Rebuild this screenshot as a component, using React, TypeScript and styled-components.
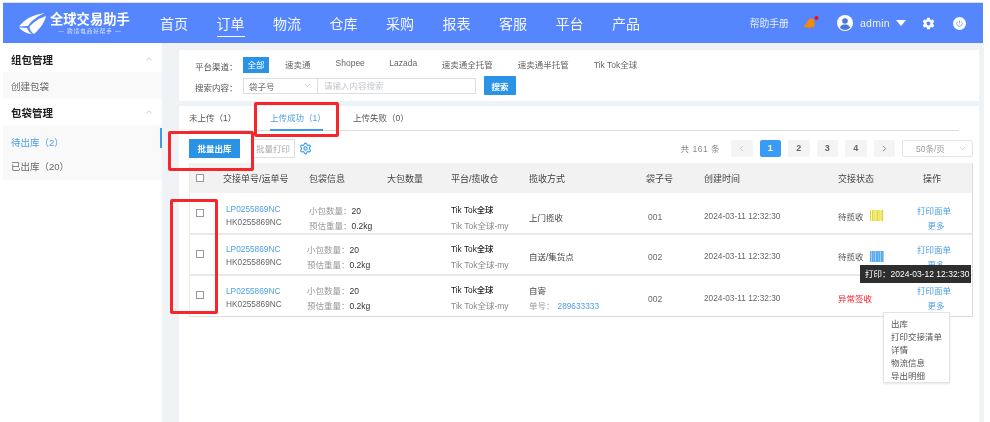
import React from "react"
import styled, { createGlobalStyle } from "styled-components"
import { ChevronDown, ChevronLeft, ChevronRight, ChevronUp, Settings } from "lucide-react"
import { IoSettingsSharp } from "react-icons/io5"

const GlobalStyle = createGlobalStyle`
  html, body { margin: 0; padding: 0; background: #fff; }
  * { box-sizing: border-box; }
  body { font-family: "Liberation Sans", "Noto Sans CJK SC", sans-serif; overflow: hidden; }
`

const navItems = ["首页", "订单", "物流", "仓库", "采购", "报表", "客服", "平台", "产品"]
const channels = ["全部", "速卖通", "Shopee", "Lazada", "速卖通全托管", "速卖通半托管", "Tik Tok全球"]
const columns = ["交接单号/运单号", "包袋信息", "大包数量", "平台/揽收仓", "揽收方式", "袋子号", "创建时间", "交接状态", "操作"]
const moreMenu = ["出库", "打印交接清单", "详情", "物流信息", "导出明细"]

const rows = [
  { bag: "001", height: 42, top: 5, drop: 5, shift: 0, method: "上门揽收", status: "待揽收", code: "#e6d92e", bar: 1.2 },
  { bag: "002", height: 41, top: 3, drop: 2, shift: -2, method: "自送/集货点", status: "待揽收", code: "#5aaaf0", bar: 1.6 },
  { bag: "002", height: 40, top: 3, drop: 1, shift: -2, method: "自寄", tracking: "289633333", status: "异常签收" },
]

const Barcode = ({ color, bar }: { color: string; bar: number }) => (
  <svg width="14" height="11" viewBox="0 0 14 11">
    {[0, 2, 3.5, 5.5, 7, 8.5, 10.5, 12].map((x) => (
      <rect key={x} x={x} y="0" width={bar} height="11" fill={color} />
    ))}
  </svg>
)

const Logo = () => (
  <LogoWrap>
    <svg width="29" height="23" viewBox="0 0 29 23">
      <path d="M1 14.5C6 8 13 3 27 1c-7 3-13 7-17 13z" fill="#fff" />
      <path d="M1 15.5l8 .5c1 3 3 5 5 6C9 22 4 19 1 15.500z" fill="#fff" />
      <path d="M11.500 15C15 10.500 20 7 28 4c-1 5-5 12-12 18-2.500-1.500-4-4-4.500-7z" fill="#fff" />
    </svg>
    <LogoText>
      <LogoTitle>全球交易助手</LogoTitle>
      <LogoSub>— 跨境电商好帮手 —</LogoSub>
    </LogoText>
  </LogoWrap>
)

const App = () => {
  return (
    <Page>
      <GlobalStyle />
      <Header>
        <Logo />
        <Nav>
          {navItems.map((item) => (
            <NavItem key={item} $active={item === "订单"}>{item}</NavItem>
          ))}
        </Nav>
        <HeaderRight>
          <HelpLink>帮助手册</HelpLink>
          <svg width="16" height="14" viewBox="0 0 16 14">
            <path d="M.5 9.500C3 8.500 4 6.500 5 4.500 6 2.500 8.500 2 10 3c1.500 1 2 2.500 1.500 4.500L11 12l-3-1.500-.5 2.500L5 11l-1.500 1z" fill="#f58a07" />
            <circle cx="13.500" cy="2" r="2" fill="#e8111e" />
          </svg>
          <User>
            <svg width="16" height="16" viewBox="0 0 16 16">
              <circle cx="8" cy="8" r="8" fill="#fff" />
              <circle cx="8" cy="6" r="2.800" fill="#4a78d8" />
              <path d="M2.800 12.500C4 10 6 9.500 8 9.500s4 .5 5.200 3C12 14 10 15 8 15s-4-1-5.200-2.500z" fill="#4a78d8" />
            </svg>
            <UserName>admin</UserName>
            <Caret />
          </User>
          <IoSettingsSharp size={13} color="#fff" />
          <svg width="13" height="13" viewBox="0 0 13 13">
            <circle cx="6.500" cy="6.500" r="6.500" fill="#fff" />
            <path d="M4.600 4.500a2.800 2.800 0 1 0 3.800 0M6.500 3.500v3" fill="none" stroke="#7fa6ff" strokeWidth=".9" />
          </svg>
        </HeaderRight>
      </Header>
      <Body>
        <Sidebar>
          <SideTitle>组包管理<ChevronUp size={10} color="#c4c4c4" /></SideTitle>
          <SideGroup>
            <SideItem $tall>创建包袋</SideItem>
          </SideGroup>
          <SideTitle>包袋管理<ChevronUp size={10} color="#c4c4c4" /></SideTitle>
          <SideGroup $padded>
            <SideItem $active>待出库（2）</SideItem>
            <SideItem>已出库（20）</SideItem>
          </SideGroup>
        </Sidebar>
        <Content>
          <FilterCard>
            <FilterRow>
              <FilterLabel>平台渠道：</FilterLabel>
              {channels.map((c, i) => (
                <Channel key={c} $active={i === 0} $latin={c === "Shopee" || c === "Lazada"}>{c}</Channel>
              ))}
            </FilterRow>
            <FilterRow>
              <FilterLabel>搜索内容：</FilterLabel>
              <SearchGroup>
                <SearchSelect>袋子号<ChevronDown size={9} color="#b5b5b5" /></SearchSelect>
                <SearchInput>请输入内容搜索</SearchInput>
              </SearchGroup>
              <SearchButton>搜索</SearchButton>
            </FilterRow>
          </FilterCard>
          <ListCard>
            <Tabs>
              <Tab>未上传（1）</Tab>
              <Tab $active>上传成功（1）</Tab>
              <Tab>上传失败（0）</Tab>
            </Tabs>
            <Toolbar>
              <PrimaryButton>批量出库</PrimaryButton>
              <GhostButton>批量打印</GhostButton>
              <Settings size={13} color="#3d9be9" />
              <Pager>
                <Total>共 161 条</Total>
                <PageBtn $muted><ChevronLeft size={9} /></PageBtn>
                <PageBtn $active>1</PageBtn>
                <PageBtn>2</PageBtn>
                <PageBtn>3</PageBtn>
                <PageBtn>4</PageBtn>
                <PageBtn><ChevronRight size={9} /></PageBtn>
                <PageSize>50条/页<ChevronDown size={9} color="#c4c4c4" /></PageSize>
              </Pager>
            </Toolbar>
            <Table>
              <HeadRow>
                <CheckCell><Checkbox /></CheckCell>
                {columns.map((c) => (
                  <HeadCell key={c}>{c}</HeadCell>
                ))}
              </HeadRow>
              {rows.map((row, i) => (
                <Row key={i} $height={row.height} $top={row.top} $last={i === rows.length - 1}>
                  <RowCheckCell><Checkbox /></RowCheckCell>
                  <Stack $gap={4}>
                    <LinkCode>LP0255869NC</LinkCode>
                    <PlainCode>HK0255869NC</PlainCode>
                  </Stack>
                  <Stack $gap={5} $shift={row.shift} $drop={row.drop}>
                    <Info>小包数量：<b>20</b></Info>
                    <Info>预估重量：<b>0.2kg</b></Info>
                  </Stack>
                  <div />
                  <Stack $gap={6} $drop={row.drop}>
                    <Platform>Tik Tok全球</Platform>
                    <Warehouse>Tik Tok全球-my</Warehouse>
                  </Stack>
                  <Stack $gap={5} $drop={row.drop}>
                    <Method>{row.method}</Method>
                    {row.tracking && <Info>单号：<LinkCode as="span">{row.tracking}</LinkCode></Info>}
                  </Stack>
                  <BagNo>{row.bag}</BagNo>
                  <Time>2024-03-11 12:32:30</Time>
                  <Status $danger={!row.code}>
                    {row.status}
                    {row.code && <Barcode color={row.code} bar={row.bar} />}
                  </Status>
                  <Ops $drop={row.drop}>
                    <span>打印面单</span>
                    <MoreLink>更多</MoreLink>
                  </Ops>
                </Row>
              ))}
              <Tooltip>打印：2024-03-12 12:32:30</Tooltip>
              <Menu>
                {moreMenu.map((m) => (
                  <MenuItem key={m}>{m}</MenuItem>
                ))}
              </Menu>
            </Table>
          </ListCard>
        </Content>
      </Body>
      <Mark $top={102} $left={254} $width={85} $height={35} />
      <Mark $top={131} $left={168} $width={86} $height={40} />
      <Mark $top={199} $left={170} $width={48} $height={115} />
    </Page>
  )
}

export default App

const Page = styled.div`
  position: relative;
  width: 990px;
  height: 422px;
  padding: 3px 7px 0 3px;
  overflow: hidden;
  background: #fff;
  /* the source capture is a soft upscale */
  filter: blur(0.3px);
`

const Header = styled.header`
  height: 40px;
  background: #5586fe;
  display: flex;
  align-items: center;
  padding-left: 15px;
  color: #fff;
  box-shadow: 0 -1px 0 #dcdcdc;
`

const LogoWrap = styled.div`
  width: 142px;
  display: flex;
  align-items: center;
  gap: 3px;
`

const LogoText = styled.div`
  display: flex;
  flex-direction: column;
  align-items: center;
`

const LogoTitle = styled.div`
  font-size: 13.300px;
  font-weight: 700;
  line-height: 15px;
  white-space: nowrap;
  width: 80px;
`

const LogoSub = styled.div`
  font-size: 5.500px;
  line-height: 8px;
  letter-spacing: 1px;
  white-space: nowrap;
  color: #dfe8ff;
`

const Nav = styled.nav`
  display: flex;
  gap: 28.500px;
  height: 100%;
`

const NavItem = styled.div<{ $active?: boolean }>`
  width: 28px;
  height: 100%;
  font-size: 14px;
  line-height: 42px;
  white-space: nowrap;
  color: #f4f7ff;
  box-shadow: ${({ $active }) => ($active ? "inset 0 -7px 0 -6px #fff" : "none")};
  border-bottom: ${({ $active }) => ($active ? "6px solid transparent" : "none")};
`

const HeaderRight = styled.div`
  margin-left: auto;
  display: flex;
  align-items: center;
  padding-right: 17px;
  gap: 18px;
`

const HelpLink = styled.span`
  font-size: 9.800px;
  color: #e8eeff;
  margin-right: -4px;
`

const User = styled.div`
  display: flex;
  align-items: center;
  gap: 7px;
  margin-right: -2px;
`

const UserName = styled.span`
  font-size: 10.500px;
  letter-spacing: 0.300px;
  color: #eef3ff;
`

const Caret = styled.i`
  width: 0;
  height: 0;
  margin-left: -1px;
  border-left: 5px solid transparent;
  border-right: 5px solid transparent;
  border-top: 6px solid #fff;
`

const Body = styled.div`
  display: flex;
  height: 379px;
`

const Sidebar = styled.aside`
  width: 159px;
  flex-shrink: 0;
  background: #fff;
  padding-top: 3px;
`

const SideTitle = styled.div`
  height: 26px;
  padding: 0 8px;
  display: flex;
  align-items: center;
  justify-content: space-between;
  font-size: 10.500px;
  font-weight: 700;
  color: #222;
`

const SideGroup = styled.div<{ $padded?: boolean }>`
  background: #f9f9f9;
  padding: ${({ $padded }) => ($padded ? "5px 0 2px" : "0")};
`

const SideItem = styled.div<{ $active?: boolean; $tall?: boolean }>`
  position: relative;
  height: ${({ $tall }) => ($tall ? "27px" : "24px")};
  padding-left: 8px;
  display: flex;
  align-items: center;
  font-size: 9.500px;
  color: ${({ $active }) => ($active ? "#4b9fe9" : "#666")};
  &::after {
    content: "";
    display: ${({ $active }) => ($active ? "block" : "none")};
    position: absolute;
    right: 0;
    top: -2px;
    height: 20px;
    width: 2px;
    background: #3d9be9;
  }
`

const Content = styled.main`
  flex: 1;
  background: #f0f3f6;
  padding: 7px 5px 0 17px;
  display: flex;
  flex-direction: column;
  gap: 5px;
`

const FilterCard = styled.section`
  background: #fff;
  height: 51px;
  padding: 5px 0 0 16px;
  display: flex;
  flex-direction: column;
  gap: 2px;
`

const FilterRow = styled.div`
  display: flex;
  align-items: center;
  height: 19px;
`

const FilterLabel = styled.span`
  width: 48px;
  font-size: 8.500px;
  color: #555;
  flex-shrink: 0;
  padding-top: 2px;
`

const Channel = styled.span<{ $active?: boolean; $latin?: boolean }>`
  height: 16px;
  line-height: 16px;
  padding: ${({ $active }) => ($active ? "0 4.500px" : "0")};
  margin-right: ${({ $active, $latin }) => ($active ? "16px" : $latin ? "24.500px" : "25px")};
  margin-top: ${({ $latin }) => ($latin ? "-4px" : "0")};
  font-size: 8.500px;
  color: ${({ $active }) => ($active ? "#fff" : "#666")};
  background: ${({ $active }) => ($active ? "#2b93e6" : "transparent")};
  white-space: nowrap;
`

const SearchGroup = styled.div`
  width: 233px;
  height: 16px;
  display: flex;
  border: 1px solid #dcdfe6;
`

const SearchSelect = styled.div`
  width: 74px;
  display: flex;
  align-items: center;
  justify-content: space-between;
  padding: 0 5px;
  font-size: 8.500px;
  color: #666;
  border-right: 1px solid #dcdfe6;
`

const SearchInput = styled.div`
  flex: 1;
  padding-left: 6px;
  font-size: 8.500px;
  line-height: 14px;
  color: #c4c6cc;
`

const SearchButton = styled.button`
  width: 32px;
  height: 19px;
  margin-left: 8px;
  padding: 0;
  border: none;
  border-radius: 1px;
  background: #2b93e6;
  color: #fff;
  font: 700 8.500px "Liberation Sans", "Noto Sans CJK SC", sans-serif;
`

const ListCard = styled.section`
  flex: 1;
  background: #fff;
  padding: 0 6px 0 10px;
`

const Tabs = styled.div`
  height: 25px;
  margin-right: 14px;
  display: flex;
  align-items: flex-end;
  border-bottom: 1px solid #dedede;
`

const Tab = styled.div<{ $active?: boolean }>`
  width: ${({ $active }) => ($active ? "53px" : "81px")};
  height: 25px;
  margin-right: ${({ $active }) => ($active ? "30px" : "0")};
  line-height: 24px;
  font-size: 8.500px;
  white-space: nowrap;
  color: ${({ $active }) => ($active ? "#4b9fe9" : "#555")};
  border-bottom: ${({ $active }) => ($active ? "2px solid #3d9be9" : "none")};
  margin-bottom: -1px;
`

const Toolbar = styled.div`
  height: 32px;
  display: flex;
  align-items: center;
  padding-top: 2px;
`

const PrimaryButton = styled.button`
  width: 51px;
  height: 19px;
  padding: 0;
  border: none;
  background: #2b93e6;
  color: #fff;
  font: 700 8.500px "Liberation Sans", "Noto Sans CJK SC", sans-serif;
`

const GhostButton = styled.button`
  width: 44px;
  height: 19px;
  margin: 0 4px 0 11px;
  padding: 0;
  border: 1px solid #dedede;
  background: #fff;
  color: #aaa;
  font: 8.500px "Liberation Sans", "Noto Sans CJK SC", sans-serif;
`

const Pager = styled.div`
  margin-left: auto;
  display: flex;
  align-items: center;
  gap: 7px;
`

const Total = styled.span`
  font-size: 8.500px;
  letter-spacing: 0.500px;
  color: #888;
  margin-right: 4px;
`

const PageBtn = styled.div<{ $active?: boolean; $muted?: boolean }>`
  width: 21.500px;
  height: 17px;
  display: flex;
  align-items: center;
  justify-content: center;
  font-size: 9px;
  font-weight: 700;
  border-radius: 2px;
  color: ${({ $active, $muted }) => ($active ? "#fff" : $muted ? "#bbb" : "#666")};
  background: ${({ $active }) => ($active ? "#3a9bf6" : "#f4f4f5")};
`

const PageSize = styled.div`
  width: 71px;
  height: 17px;
  display: flex;
  align-items: center;
  justify-content: space-between;
  padding: 0 5px 0 13px;
  font-size: 8.500px;
  color: #999;
  border: 1px solid #e4e4e4;
  border-radius: 2px;
`

const Table = styled.div`
  position: relative;
  border-left: 1px solid #ececec;
  border-right: 1px solid #dcdcdc;
  border-bottom: 1px solid #dcdcdc;
`

const grid = `
  display: grid;
  grid-template-columns: 33px 86px 78px 64px 78px 117px 58px 134px 79px 55px;
  align-items: center;
`

const HeadRow = styled.div`
  ${grid}
  height: 30px;
  background: #f2f2f2;
`

const HeadCell = styled.div`
  font-size: 9px;
  color: #444;
  white-space: nowrap;
  &:last-child {
    padding-left: 6px;
  }
`

const Row = styled.div<{ $height: number; $top: number; $last?: boolean }>`
  ${grid}
  height: ${({ $height }) => $height}px;
  padding-top: ${({ $top }) => $top}px;
  position: relative;
  border-bottom: ${({ $last }) => ($last ? "none" : "2px solid #e8e8e8")};
`

const CheckCell = styled.div`
  display: flex;
  justify-content: center;
  padding-right: 13px;
`

const RowCheckCell = styled(CheckCell)`
  margin-top: -5px;
`

const Checkbox = styled.span`
  width: 8px;
  height: 8px;
  border: 1px solid #999;
  background: #fff;
`

const Stack = styled.div<{ $gap: number; $shift?: number; $drop?: number }>`
  display: flex;
  flex-direction: column;
  gap: ${({ $gap }) => $gap}px;
  margin-left: ${({ $shift }) => $shift ?? 0}px;
  margin-top: ${({ $drop }) => $drop ?? 0}px;
  white-space: nowrap;
`

const LinkCode = styled.div`
  font-size: 8.300px;
  line-height: 9px;
  color: #4b9fe9;
  padding-left: 3px;
`

const PlainCode = styled(LinkCode)`
  color: #666;
`

const Info = styled.div`
  font-size: 8.500px;
  line-height: 10px;
  color: #999;
  b {
    font-weight: 400;
    color: #333;
  }
`

const Platform = styled.div`
  font-size: 8.300px;
  line-height: 10px;
  font-weight: 500;
  color: #222;
`

const Warehouse = styled.div`
  font-size: 8.500px;
  line-height: 10px;
  color: #888;
`

const Method = styled.div`
  font-size: 8.500px;
  line-height: 10px;
  color: #444;
`

const BagNo = styled.div`
  font-size: 8.500px;
  color: #666;
  padding-left: 2px;
  padding-top: 2px;
`

const Time = styled.div`
  font-size: 8.300px;
  color: #666;
`

const Status = styled.div<{ $danger?: boolean }>`
  display: flex;
  align-items: center;
  gap: 6px;
  font-size: 8.500px;
  white-space: nowrap;
  color: ${({ $danger }) => ($danger ? "#f5222d" : "#555")};
`

const Ops = styled.div<{ $drop: number }>`
  display: flex;
  flex-direction: column;
  align-items: center;
  gap: 5px;
  width: 34px;
  margin-top: ${({ $drop }) => $drop}px;
  font-size: 8.500px;
  line-height: 10px;
  color: #4b9fe9;
  white-space: nowrap;
`

const MoreLink = styled.span`
  padding-left: 4px;
`

const Tooltip = styled.div`
  position: absolute;
  top: 102px;
  right: 1px;
  width: 111px;
  height: 18px;
  padding-left: 5px;
  background: #2e2e2e;
  color: #fff;
  font-size: 8.500px;
  line-height: 18px;
  white-space: nowrap;
`

const Menu = styled.div`
  position: absolute;
  top: 149px;
  left: 693px;
  width: 67px;
  height: 71px;
  padding: 5px 0 0 7px;
  background: #fff;
  border: 1px solid #e4e4e4;
  box-shadow: 0 1px 2px rgba(0, 0, 0, 0.1);
`

const MenuItem = styled.div`
  font-size: 8.500px;
  line-height: 13px;
  color: #555;
`

const Mark = styled.div<{ $top: number; $left: number; $width: number; $height: number }>`
  position: absolute;
  top: ${({ $top }) => $top}px;
  left: ${({ $left }) => $left}px;
  width: ${({ $width }) => $width}px;
  height: ${({ $height }) => $height}px;
  border: 3px solid #f5262c;
  border-radius: 2px;
  pointer-events: none;
`
